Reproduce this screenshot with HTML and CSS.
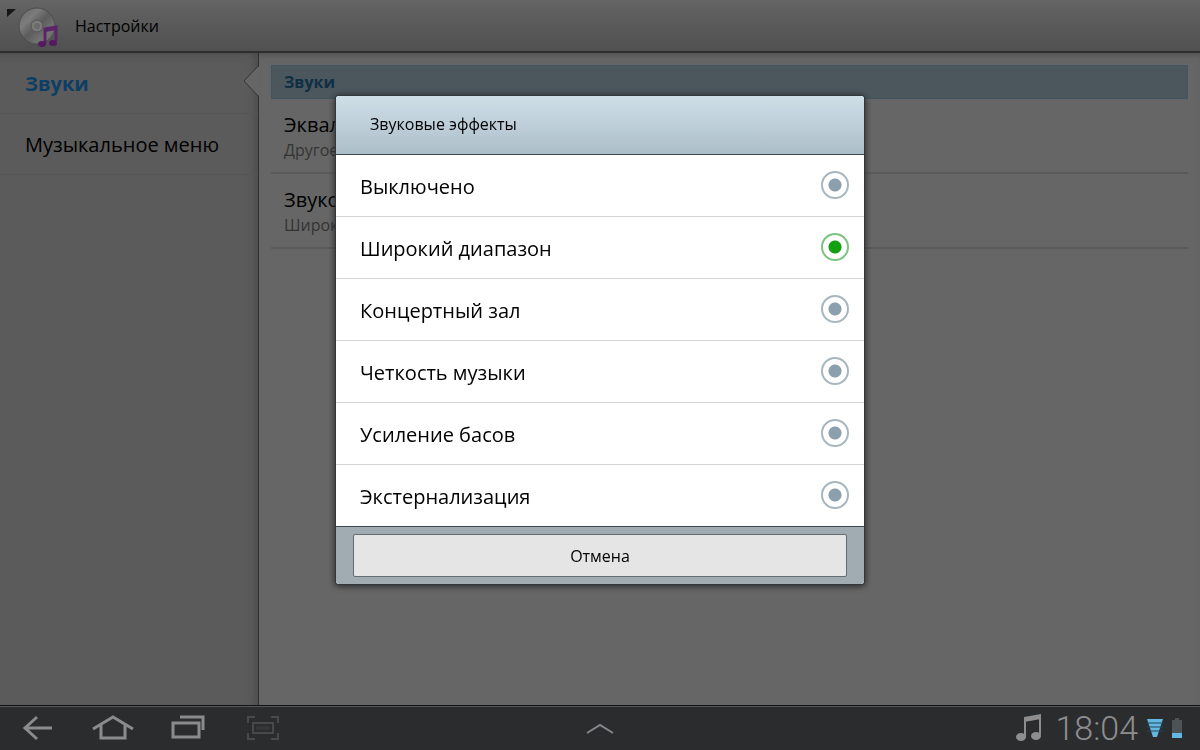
FILE: index.html
```html
<!DOCTYPE html>
<html lang="ru">
<head>
    <meta charset="UTF-8">
    <meta name="viewport" content="width=device-width, initial-scale=1.0">
    <title>Настройки</title>
    <link rel="stylesheet" href="styles.css">
</head>
<body>

<header class="topbar">
    <button class="up-btn" aria-label="Назад к музыке">
        <svg width="54" height="44" viewBox="0 0 54 44">
            <defs>
                <linearGradient id="disc" x1="0" y1="0" x2="1" y2="1">
                    <stop offset="0" stop-color="#666"/>
                    <stop offset="0.3" stop-color="#7c7c7c"/>
                    <stop offset="0.5" stop-color="#5c5c5c"/>
                    <stop offset="0.75" stop-color="#747474"/>
                    <stop offset="1" stop-color="#606060"/>
                </linearGradient>
            </defs>
            <path d="M2 5h9l-9 8z" fill="#151515"/>
            <circle cx="32" cy="22" r="18" fill="url(#disc)" stroke="#4c4c4c"/>
            <circle cx="32" cy="22" r="6" fill="#7a7a7a" stroke="#555"/>
            <circle cx="32" cy="22" r="3" fill="#6b6b6b"/>
            <path d="M40 39V25l11-2v14" fill="none" stroke="#5c2468" stroke-width="3"/>
            <path d="M40 26l11-2" stroke="#5c2468" stroke-width="4"/>
            <ellipse cx="37" cy="40" rx="4" ry="3" fill="#54195f"/>
            <ellipse cx="48" cy="39" rx="4" ry="3" fill="#54195f"/>
        </svg>
    </button>
    <h1>Настройки</h1>
</header>

<div class="content">
    <nav class="sidebar">
        <a href="#sounds" class="active">Звуки
            <svg class="notch" width="16" height="32" viewBox="0 0 16 32">
                <path d="M16 1L1 16l15 15z" fill="#666"/>
                <path d="M15 1L1 16l14 15" fill="none" stroke="#383838"/>
            </svg>
        </a>
        <a href="#menu">Музыкальное меню</a>
    </nav>
    <main class="settings" id="sounds">
        <h2>Звуки</h2>
        <div class="setting">
            <div class="name">Эквалайзер</div>
            <div class="value">Другое</div>
        </div>
        <div class="setting">
            <div class="name">Звуковые эффекты</div>
            <div class="value">Широкий диапазон</div>
        </div>
    </main>
</div>

<footer class="sysbar">
    <button class="nav-btn" aria-label="Назад">
        <svg width="34" height="30" viewBox="0 0 34 30">
            <path d="M31 15H4M16 4L4 15l12 11" fill="none" stroke="#8b8b8b" stroke-width="3"/>
        </svg>
    </button>
    <button class="nav-btn" aria-label="Домой">
        <svg width="42" height="30" viewBox="0 0 42 30">
            <path d="M1 16L21 4l20 12M9 12v13h24V12" fill="none" stroke="#8b8b8b" stroke-width="3"/>
        </svg>
    </button>
    <button class="nav-btn" aria-label="Недавние">
        <svg width="36" height="30" viewBox="0 0 36 30">
            <path d="M3 10h26v14H3zM10 4h23v13" fill="none" stroke="#8b8b8b" stroke-width="3"/>
        </svg>
    </button>
    <button class="nav-btn" aria-label="Снимок экрана">
        <svg width="34" height="30" viewBox="0 0 34 30">
            <path d="M2 10V4h7M25 4h7v6M32 20v6h-7M9 26H2v-6M7 10h20v10H7z" fill="none" stroke="#47494b" stroke-width="2"/>
            <path d="M10 13h14v4H10z" fill="#353638"/>
        </svg>
    </button>
    <button class="expand-btn" aria-label="Показать приложения">
        <svg width="30" height="14" viewBox="0 0 30 14">
            <path d="M2 11l13-8 13 8" fill="none" stroke="#85878a" stroke-width="2"/>
        </svg>
    </button>
    <div class="status">
        <svg width="26" height="28" viewBox="0 0 26 28">
            <path d="M9 23V5l15-3v19" fill="none" stroke="#8e8e8e" stroke-width="2"/>
            <path d="M8 3l17-3v5L8 8z" fill="#8e8e8e"/>
            <ellipse cx="5" cy="23" rx="5" ry="4" fill="#8e8e8e"/>
            <ellipse cx="20" cy="22" rx="5" ry="4" fill="#8e8e8e"/>
        </svg>
        <span class="clock">18:04</span>
        <svg width="16" height="20" viewBox="0 0 16 20">
            <path d="M0 1h16L10 19H6z" fill="#62b8e0"/>
            <path d="M0 5h16M0 9h16M0 13h16" stroke="#25465a"/>
        </svg>
        <svg width="10" height="20" viewBox="0 0 10 20">
            <path d="M3 0h4v2h3v13H0V2h3z" fill="#4e5356"/>
            <path d="M0 15h10v5H0z" fill="#62b8e0"/>
        </svg>
    </div>
</footer>

<div class="overlay">
    <form class="dialog" role="dialog" aria-labelledby="dialogTitle">
        <h2 id="dialogTitle">Звуковые эффекты</h2>
        <div class="options">
            <label><span>Выключено</span> <input type="radio" name="effect"></label>
            <label><span>Широкий диапазон</span> <input type="radio" name="effect" checked></label>
            <label><span>Концертный зал</span> <input type="radio" name="effect"></label>
            <label><span>Четкость музыки</span> <input type="radio" name="effect"></label>
            <label><span>Усиление басов</span> <input type="radio" name="effect"></label>
            <label><span>Экстернализация</span> <input type="radio" name="effect"></label>
        </div>
        <div class="actions">
            <button type="button">Отмена</button>
        </div>
    </form>
</div>

</body>
</html>
```
FILE: styles.css
```css
* {
    box-sizing: border-box;
}
body {
    margin: 0;
    display: flex;
    flex-direction: column;
    min-height: 100vh;
    font-family: "Open Sans", "Noto Sans", sans-serif;
    font-size: 20px;
    font-weight: 500;
    color: #000;
    background-color: #666;
}
h1, h2 {
    margin: 0;
    font-size: 16px;
    font-weight: 500;
}
button {
    padding: 0;
    border: none;
    background: none;
    font-family: inherit;
    font-weight: 500;
    cursor: pointer;
}
svg {
    display: block;
}
.topbar {
    display: flex;
    align-items: center;
    gap: 16px;
    height: 53px;
    padding-left: 5px;
    background: linear-gradient(#646464, #505050);
    border-bottom: 2px solid #2e2e2e;
}
.content {
    flex: 1;
    display: flex;
}
.sidebar {
    width: 259px;
    background-color: #5b5b5b;
    border-right: 1px solid #303030;
    box-shadow: inset -6px 4px 8px -4px #484848;
}
.sidebar a {
    position: relative;
    display: flex;
    align-items: center;
    height: 61px;
    padding-left: 25px;
    border-bottom: 1px solid #555;
    color: #000;
    text-decoration: none;
}
.sidebar .active {
    color: #0d3f66;
    font-weight: bold;
}
.notch {
    position: absolute;
    right: -1px;
    top: 12px;
}
.settings {
    flex: 1;
    padding: 12px 12px 0;
    box-shadow: inset 0 6px 6px -4px #505050;
}
.settings h2 {
    height: 34px;
    padding-left: 12px;
    line-height: 32px;
    font-weight: bold;
    color: #0f2f45;
    background-color: #4b565d;
    border: 1px solid #415462;
}
.setting {
    height: 75px;
    padding: 12px 13px 0;
    border-bottom: 2px solid #5a5a5a;
}
.name {
    line-height: 28px;
}
.value {
    font-size: 16px;
    line-height: 22px;
    color: #343434;
}
.sysbar {
    position: relative;
    display: flex;
    align-items: center;
    height: 45px;
    padding: 0 18px 0 0;
    background-color: #2b2c2e;
    border-top: 1px solid #111;
    box-shadow: inset 0 1px #55575a;
}
.nav-btn {
    display: flex;
    justify-content: center;
    width: 75px;
}
.expand-btn {
    position: absolute;
    left: 50%;
    top: 16px;
    transform: translateX(-50%);
}
.status {
    display: flex;
    align-items: center;
    gap: 9px;
    margin-left: auto;
}
.clock {
    margin-left: 4px;
    font-family: Roboto, sans-serif;
    font-size: 34px;
    font-weight: 300;
    line-height: 42px;
    color: #8e8e8e;
}
.overlay {
    position: fixed;
    inset: 0;
    display: flex;
    align-items: center;
    justify-content: center;
    padding-bottom: 70px;
}
.dialog {
    width: 44%;
    min-width: 320px;
    background-color: #fff;
    border-radius: 3px;
    box-shadow: 0 0 0 1px #33383c, 0 1px 6px 1px #222;
    overflow: hidden;
}
.dialog h2 {
    height: 59px;
    padding-left: 34px;
    line-height: 56px;
    background: linear-gradient(#cfdfe8, #acbec9);
    border-bottom: 1px solid #3e464c;
}
.options label {
    display: flex;
    align-items: center;
    justify-content: space-between;
    height: 62px;
    padding: 0 15px 2px 24px;
    border-bottom: 1px solid #d5d5d5;
}
.options label:last-child {
    border-bottom-color: #3f4a50;
}
.options span {
    padding-top: 3px;
}
.options input {
    appearance: none;
    width: 28px;
    height: 28px;
    margin: 0;
    border: 2px solid #a7b6bf;
    border-radius: 50%;
    background: radial-gradient(circle, #8c9fac 6px, #fff 7px);
}
.options input:checked {
    border-color: #7cc47f;
    background: radial-gradient(circle, #12a010 6px, #fff 7px);
}
.actions {
    padding: 7px 17px;
    background-color: #a1abb2;
}
.actions button {
    display: block;
    width: 100%;
    height: 43px;
    font-size: 16px;
    background-color: #e5e5e5;
    border: 1px solid #626c72;
    border-radius: 2px;
}
```
